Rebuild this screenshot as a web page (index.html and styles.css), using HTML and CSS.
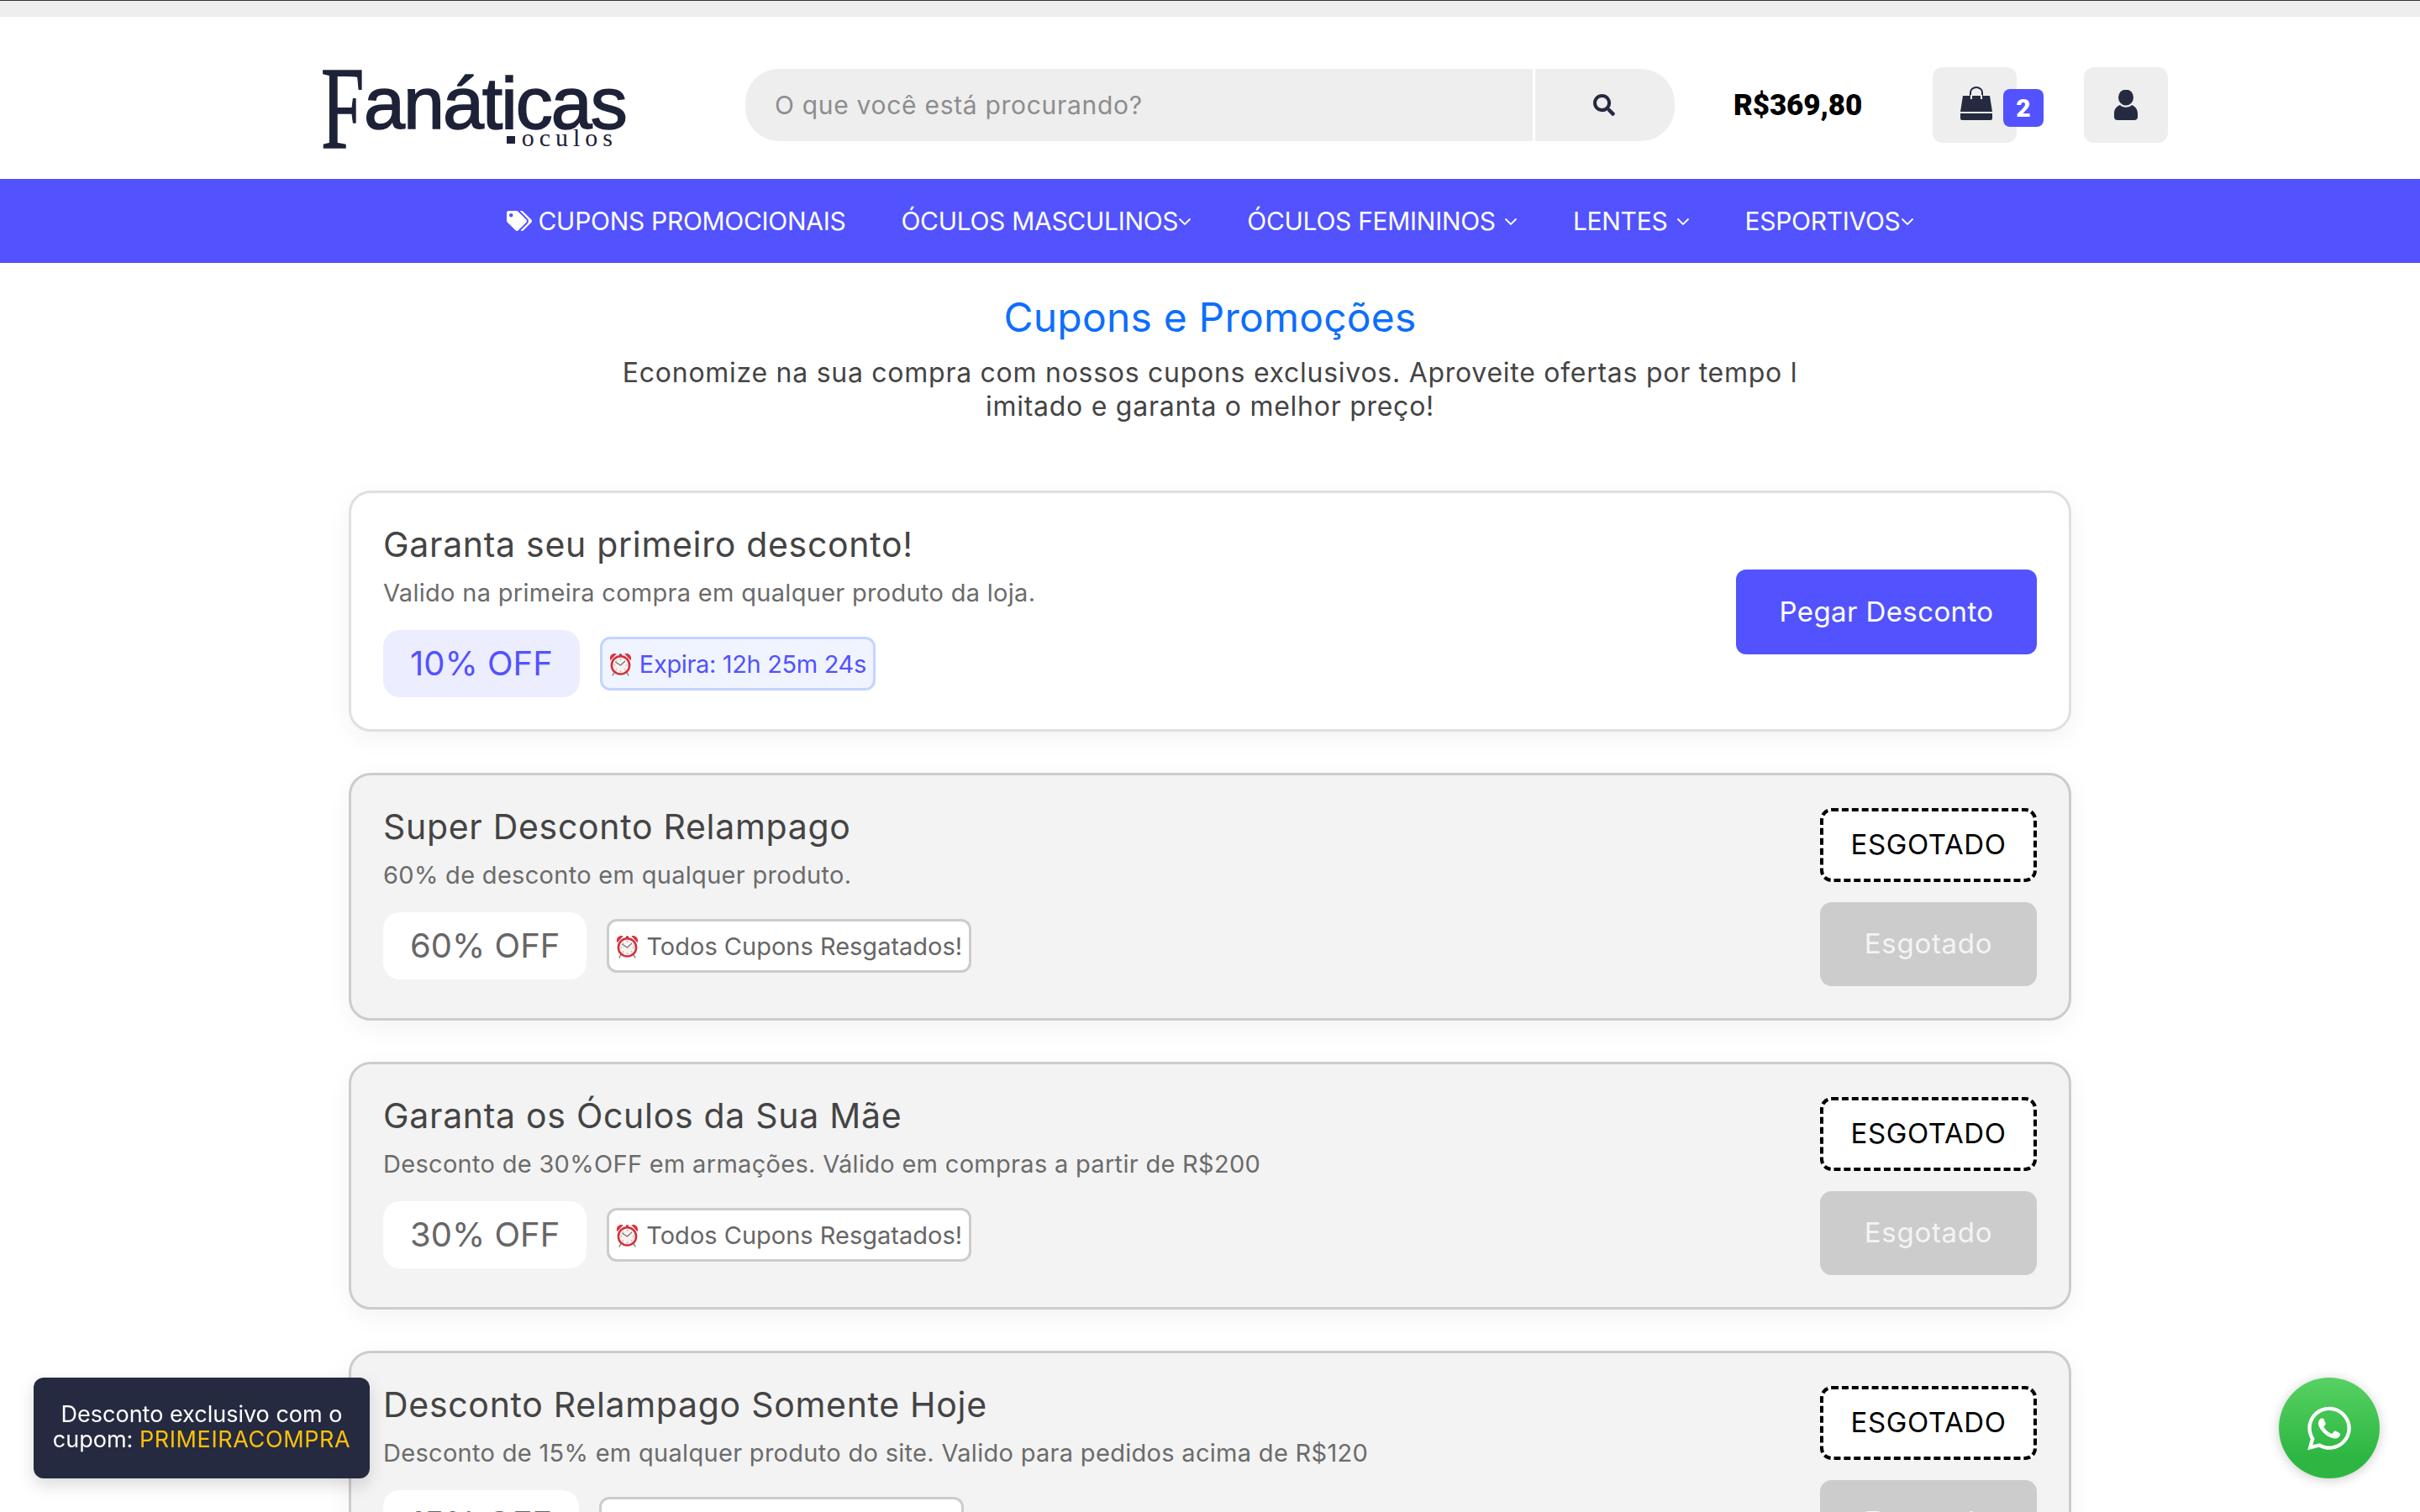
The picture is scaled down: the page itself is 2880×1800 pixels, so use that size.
FILE: index.html
```html
<!DOCTYPE html>
<html lang="pt-BR">

<head>
    <meta charset="utf-8">
    <title>Fanáticas Óculos - Cupons e Promoções</title>
    <link rel="stylesheet" href="styles.css">
</head>

<body>
<svg class="icon-defs" aria-hidden="true">
    <symbol id="i-chevron" viewBox="0 0 16 10">
        <path d="M1.5 1.5 8 8l6.5-6.5" fill="none" stroke="currentColor" stroke-width="1.8"/>
    </symbol>
    <symbol id="i-clock" viewBox="0 0 28 30">
        <path d="M1.500 10.500C-.5 6 3 .8 9 2.300zM26.500 10.500C28.500 6 25 .8 19 2.300z" fill="#d8323e"/>
        <path d="M12.500 2.500h3v2h-3z" fill="#a8232f"/>
        <path d="M6.500 25 4 29.500M21.500 25l2.500 4.500" stroke="#8a8a8a" stroke-width="1.600" fill="none"/>
        <circle cx="14" cy="16.500" r="11" fill="#f7f2f0" stroke="#d2303c" stroke-width="2.600"/>
        <path d="M14 8.200v1.800M14 23v1.800M5.700 16.500h1.800M20.500 16.500h1.800M8.200 10.700l1.200 1.200M18.600 21.100l1.200 1.200M19.800 10.700l-1.200 1.200M9.400 21.100l-1.200 1.200" stroke="#e39aa0" stroke-width="1.200"/>
        <path d="M7.500 12.500 14 16.500l5.500-5" stroke="#6e6e6e" stroke-width="1.300" fill="none"/>
    </symbol>
</svg>

<div class="top-strip"></div>

<header class="site-header">
    <a class="logo">
        <span class="logo-name"><span class="logo-f">F</span>anáticas</span>
        <span class="logo-sub"><i></i>oculos</span>
    </a>
    <form class="search">
        <div class="search-input">O que você está procurando?</div>
        <div class="search-btn">
            <svg viewBox="0 0 512 512" width="26" height="26"><path fill="#252a40" d="M505 442.700L405.300 343c-4.500-4.500-10.600-7-17-7H372c27.600-35.300 44-79.700 44-128C416 93.100 322.900 0 208 0S0 93.100 0 208s93.100 208 208 208c48.300 0 92.700-16.400 128-44v16.300c0 6.400 2.500 12.500 7 17l99.700 99.700c9.400 9.400 24.600 9.400 33.900 0l28.300-28.300c9.400-9.400 9.400-24.600.1-34zM208 336c-70.700 0-128-57.200-128-128 0-70.700 57.200-128 128-128 70.700 0 128 57.200 128 128 0 70.700-57.200 128-128 128z"/></svg>
        </div>
    </form>
    <div class="price">R$369,80</div>
    <a class="head-btn cart">
        <svg viewBox="0 0 40 40" width="40" height="40">
            <path d="M13 15V7a7 6 0 0 1 14 0v8" fill="none" stroke="#252a40" stroke-width="2"/>
            <path fill="#252a40" d="M4 11h32l3 19H1z"/>
            <path fill="#fff" d="M13 10h2v5h-2zM25 10h2v5h-2z"/>
            <path fill="#252a40" d="M1 32h38v6a2 2 0 0 1-2 2H3a2 2 0 0 1-2-2z"/>
        </svg>
        <span class="cart-count">2</span>
    </a>
    <a class="head-btn user">
        <svg viewBox="0 0 28 36" width="28" height="36">
            <ellipse cx="14" cy="9" rx="9" ry="9.500" fill="#252a40"/>
            <path fill="#252a40" d="M7 18c3 3.500 11 3.500 14 0 4 1.500 7 5 7 10v4a4 4 0 0 1-4 4H4a4 4 0 0 1-4-4v-4c0-5 3-8.500 7-10z"/>
        </svg>
    </a>
</header>

<nav class="main-nav">
    <a class="nav-item"><svg class="nav-tags" viewBox="0 0 640 512" width="30" height="24"><path fill="#fff" d="M497.941 225.941L286.059 14.059A48 48 0 0 0 252.118 0H48C21.490 0 0 21.490 0 48v204.118a48 48 0 0 0 14.059 33.941l211.882 211.882c18.744 18.745 49.136 18.746 67.882 0l204.118-204.118c18.745-18.745 18.745-49.137 0-67.882zM112 160c-26.510 0-48-21.490-48-48s21.490-48 48-48 48 21.490 48 48-21.490 48-48 48zm513.941 133.823L421.823 497.941c-18.745 18.745-49.137 18.745-67.882 0l-.36-.36L527.640 323.522c16.999-16.999 26.360-39.600 26.360-63.640s-9.362-46.641-26.360-63.640L331.397 0h48.721a48 48 0 0 1 33.941 14.059l211.882 211.882c18.745 18.745 18.745 49.137 0 67.882z"/></svg>CUPONS PROMOCIONAIS</a>
    <a class="nav-item">ÓCULOS MASCULINOS<svg class="chev" width="16" height="10"><use href="#i-chevron"/></svg></a>
    <a class="nav-item">ÓCULOS FEMININOS <svg class="chev chev-sp" width="16" height="10"><use href="#i-chevron"/></svg></a>
    <a class="nav-item">LENTES <svg class="chev chev-sp" width="16" height="10"><use href="#i-chevron"/></svg></a>
    <a class="nav-item">ESPORTIVOS<svg class="chev" width="16" height="10"><use href="#i-chevron"/></svg></a>
</nav>

<main class="coupons-page">
    <h1 class="page-title">Cupons e Promoções</h1>
    <p class="page-lead">Economize na sua compra com nossos cupons exclusivos. Aproveite ofertas por tempo l<br>imitado e garanta o melhor preço!</p>

    <div class="coupon-list">
        <section class="coupon">
            <div class="coupon-info">
                <h2 class="coupon-title">Garanta seu primeiro desconto!</h2>
                <p class="coupon-desc">Valido na primeira compra em qualquer produto da loja.</p>
                <div class="coupon-meta">
                    <span class="off">10% OFF</span>
                    <span class="timer"><svg width="27" height="29"><use href="#i-clock"/></svg>Expira: 12h 25m 24s</span>
                </div>
            </div>
            <a class="btn-get">Pegar Desconto</a>
        </section>

        <section class="coupon sold-out">
            <div class="coupon-info">
                <h2 class="coupon-title">Super Desconto Relampago</h2>
                <p class="coupon-desc">60% de desconto em qualquer produto.</p>
                <div class="coupon-meta">
                    <span class="off">60% OFF</span>
                    <span class="timer"><svg width="27" height="29"><use href="#i-clock"/></svg>Todos Cupons Resgatados!</span>
                </div>
            </div>
            <div class="coupon-side">
                <div class="tag-out">ESGOTADO</div>
                <div class="btn-out">Esgotado</div>
            </div>
        </section>

        <section class="coupon sold-out">
            <div class="coupon-info">
                <h2 class="coupon-title">Garanta os Óculos da Sua Mãe</h2>
                <p class="coupon-desc">Desconto de 30%OFF em armações. Válido em compras a partir de R$200</p>
                <div class="coupon-meta">
                    <span class="off">30% OFF</span>
                    <span class="timer"><svg width="27" height="29"><use href="#i-clock"/></svg>Todos Cupons Resgatados!</span>
                </div>
            </div>
            <div class="coupon-side">
                <div class="tag-out">ESGOTADO</div>
                <div class="btn-out">Esgotado</div>
            </div>
        </section>

        <section class="coupon sold-out">
            <div class="coupon-info">
                <h2 class="coupon-title">Desconto Relampago Somente Hoje</h2>
                <p class="coupon-desc">Desconto de 15% em qualquer produto do site. Valido para pedidos acima de R$120</p>
                <div class="coupon-meta">
                    <span class="off">15% OFF</span>
                    <span class="timer"><svg width="27" height="29"><use href="#i-clock"/></svg>Todos Cupons Resgatados!</span>
                </div>
            </div>
            <div class="coupon-side">
                <div class="tag-out">ESGOTADO</div>
                <div class="btn-out">Esgotado</div>
            </div>
        </section>
    </div>
</main>

<div class="promo-toast">Desconto exclusivo com o cupom: <b>PRIMEIRACOMPRA</b></div>

<a class="whats-btn">
    <svg viewBox="0 0 448 512" width="52" height="59"><path fill="#fff" d="M380.900 97.100C339 55.100 283.200 32 223.900 32c-122.400 0-222 99.600-222 222 0 39.100 10.200 77.300 29.600 111L0 480l117.700-30.900c32.400 17.700 68.900 27 106.100 27h.1c122.300 0 224.100-99.600 224.100-222 0-59.300-25.200-115-67.100-157zm-157 341.600c-33.200 0-65.700-8.900-94-25.700l-6.700-4-69.800 18.300L72 359.200l-4.400-7c-18.500-29.400-28.200-63.300-28.200-98.200 0-101.700 82.800-184.500 184.600-184.500 49.300 0 95.600 19.200 130.400 54.100 34.800 34.900 56.200 81.200 56.100 130.500 0 101.800-84.900 184.600-186.600 184.600zm101.200-138.200c-5.500-2.800-32.800-16.200-37.900-18-5.100-1.900-8.800-2.800-12.500 2.800-3.700 5.600-14.300 18-17.600 21.800-3.200 3.700-6.500 4.200-12 1.400-32.600-16.300-54-29.100-75.500-66-5.700-9.800 5.700-9.100 16.300-30.300 1.800-3.700.9-6.900-.5-9.700-1.400-2.800-12.500-30.100-17.100-41.200-4.500-10.800-9.100-9.300-12.500-9.500-3.200-.2-6.900-.2-10.600-.2-3.700 0-9.700 1.400-14.800 6.900-5.100 5.600-19.400 19-19.400 46.300 0 27.300 19.900 53.700 22.600 57.400 2.800 3.700 39.100 59.700 94.800 83.800 35.200 15.200 49 16.500 66.600 13.900 10.700-1.600 32.800-13.400 37.400-26.400 4.600-13 4.600-24.100 3.200-26.400-1.300-2.500-5-3.900-10.500-6.600z"/></svg>
</a>
</body>
</html>
```

FILE: styles.css
```css
* {
    margin: 0;
    padding: 0;
    box-sizing: border-box;
}

html, body {
    height: 1800px;
    overflow: hidden;
}

body {
    background-color: #fff;
    color: #444;
    font-family: Inter, "Liberation Sans", sans-serif;
    font-weight: 400;
}

.icon-defs {
    display: none;
}

.top-strip {
    height: 20px;
    background-color: #eee;
    border-top: 1px solid #333;
}

/* header */
.site-header {
    display: flex;
    align-items: center;
    height: 193px;
    padding: 60px 0 43px 382px;
}

.logo {
    display: flex;
    flex-direction: column;
    width: 362px;
    height: 96px;
    margin-top: 6px;
    color: #1e2238;
}

.logo-name {
    display: block;
    height: 74px;
    font-family: "Liberation Sans", sans-serif;
    font-size: 88px;
    line-height: 85px;
    letter-spacing: -2px;
    white-space: nowrap;
    -webkit-text-stroke: 1.600px #1e2238;
}

.logo-f {
    display: inline-block;
    width: 51px;
    font-family: "Liberation Serif", serif;
    font-size: 140px;
    line-height: 0;
    vertical-align: -23px;
    transform: scaleX(.66);
    transform-origin: left center;
}

.logo-sub {
    display: flex;
    align-items: center;
    align-self: flex-end;
    height: 20px;
    margin-right: 9px;
    font-family: "Liberation Serif", serif;
    font-size: 30px;
    line-height: 20px;
    letter-spacing: 6px;
}

.logo-sub i {
    width: 10px;
    height: 9px;
    margin: 4px 8px 0 0;
    background-color: #1e2238;
}

.search {
    display: flex;
    width: 1106px;
    height: 86px;
    margin-left: 143px;
    border-radius: 40px;
    overflow: hidden;
}

.search-input {
    display: flex;
    flex: 1;
    align-items: center;
    padding-left: 35px;
    background-color: #eee;
    color: #8d8d8d;
    font-size: 30px;
    letter-spacing: .7px;
}

.search-btn {
    display: flex;
    width: 166px;
    margin-left: 3px;
    padding-right: 2px;
    justify-content: center;
    align-items: center;
    background-color: #eee;
}

.price {
    width: 151px;
    margin-left: 70px;
    color: #000;
    font-family: Roboto, sans-serif;
    font-size: 35px;
    font-weight: 900;
    letter-spacing: -.1px;
    white-space: nowrap;
}

.head-btn {
    position: relative;
    display: flex;
    width: 100px;
    height: 90px;
    justify-content: center;
    align-items: center;
    background-color: #eee;
    border-radius: 12px;
}

.cart {
    margin-left: 86px;
}

.cart svg {
    margin: -4px 0 0 4px;
}

.user {
    margin-left: 80px;
}

.cart-count {
    position: absolute;
    top: 26px;
    left: 84px;
    width: 48px;
    height: 45px;
    background-color: #5252ff;
    border-radius: 8px;
    color: #fff;
    font-family: Roboto, sans-serif;
    font-size: 30px;
    font-weight: 900;
    line-height: 45px;
    text-align: center;
}

/* nav */
.main-nav {
    display: flex;
    justify-content: center;
    align-items: center;
    gap: 66px;
    height: 100px;
    background-color: #5252ff;
    color: #fff;
    font-size: 30px;
    letter-spacing: -.3px;
}

.nav-item {
    display: flex;
    align-items: center;
    white-space: pre;
}

.nav-tags {
    margin-right: 8px;
}

.chev {
    margin-top: 2px;
}

.chev-sp {
    margin-left: 2px;
}

/* page */
.page-title {
    padding-top: 36px;
    color: #0d6efd;
    font-size: 48px;
    font-weight: 400;
    line-height: 58px;
    text-align: center;
    letter-spacing: .2px;
}

.page-lead {
    margin-top: 17px;
    color: #444;
    font-size: 32px;
    line-height: 40px;
    text-align: center;
    letter-spacing: .73px;
}

.coupon-list {
    display: flex;
    flex-direction: column;
    gap: 49px;
    width: 2050px;
    margin: 80px 0 0 415px;
}

.coupon {
    display: flex;
    flex-shrink: 0;
    justify-content: space-between;
    align-items: center;
    padding: 39px 38px 38px;
    background-color: #fff;
    border: 3px solid #e0e0e0;
    border-radius: 26px;
    box-shadow: 0 8px 30px rgba(0, 0, 0, .05);
}

.coupon.sold-out {
    background-color: #f3f3f3;
    border-color: #ccc;
}

.coupon-info {
    align-self: flex-start;
}

.coupon-title {
    color: #444;
    font-size: 41px;
    font-weight: 400;
    line-height: 44px;
    letter-spacing: .7px;
}

.coupon-desc {
    margin-top: 18px;
    color: #6b6b6b;
    font-size: 29px;
    line-height: 35px;
    letter-spacing: .3px;
}

.coupon-meta {
    display: flex;
    align-items: center;
    gap: 24px;
    margin-top: 27px;
}

.off {
    height: 80px;
    padding: 0 32px;
    background-color: #ecedff;
    border-radius: 20px;
    color: #5252ff;
    font-size: 40px;
    line-height: 80px;
}

.timer {
    display: flex;
    align-items: center;
    gap: 9px;
    height: 64px;
    padding: 0 8px;
    background-color: #f0f4ff;
    border: 3px solid #c5d4ff;
    border-radius: 12px;
    color: #5252ff;
    font-size: 29px;
    letter-spacing: -.35px;
}

.sold-out .off {
    background-color: #fff;
    color: #666;
}

.sold-out .timer {
    background-color: #fff;
    border-color: #ccc;
    color: #666;
    letter-spacing: 0;
}

.btn-get {
    display: flex;
    width: 358px;
    height: 101px;
    justify-content: center;
    align-items: center;
    background-color: #5252ff;
    border-radius: 12px;
    color: #fff;
    font-size: 33px;
    letter-spacing: .4px;
}

.coupon-side {
    display: flex;
    flex-direction: column;
    gap: 24px;
    width: 258px;
}

.tag-out {
    height: 88px;
    background-color: #fff;
    border: 4px dashed #000;
    border-radius: 14px;
    color: #000;
    font-size: 33px;
    line-height: 78px;
    letter-spacing: .6px;
    text-align: center;
}

.btn-out {
    height: 100px;
    background-color: #ccc;
    border-radius: 14px;
    color: #f4f4f4;
    font-size: 33px;
    line-height: 98px;
    letter-spacing: .7px;
    text-align: center;
}

/* floating */
.promo-toast {
    position: fixed;
    left: 40px;
    bottom: 40px;
    width: 400px;
    height: 120px;
    padding: 29px 14px 0;
    background-color: #252a40;
    border-radius: 12px;
    box-shadow: 0 8px 20px rgba(0, 0, 0, .15);
    color: #fff;
    font-size: 27px;
    line-height: 30px;
    text-align: center;
}

.promo-toast b {
    color: #ffc107;
    font-weight: 400;
    letter-spacing: .6px;
}

.whats-btn {
    position: fixed;
    right: 48px;
    bottom: 40px;
    display: flex;
    width: 120px;
    height: 120px;
    justify-content: center;
    align-items: center;
    background: linear-gradient(#57d163, #2db742 78%);
    border-radius: 50%;
    box-shadow: 0 2px 14px rgba(0, 0, 0, .2);
}
```
